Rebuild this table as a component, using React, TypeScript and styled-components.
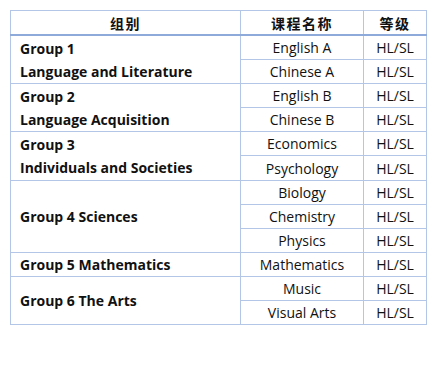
import React from 'react';
import styled, { createGlobalStyle } from 'styled-components';

const GlobalStyle = createGlobalStyle`
  body {
    margin: 0;
    background: #ffffff;
    font-family: "Open Sans", "Noto Sans CJK SC", sans-serif;
    color: #111111;
  }
`;

const Page = styled.div`
  padding: 10px 0 0 10px;
`;

const Table = styled.table`
  border-collapse: collapse;
  width: 413px;
  font-size: 14px;
  table-layout: fixed;
`;

const HeadCell = styled.th<{ $w: number }>`
  width: ${(p) => p.$w}px;
  height: 23px;
  padding: 0;
  border: 1px solid #b4c6e7;
  border-bottom: 2px solid #8eaadb;
  font-family: "Noto Sans CJK SC", sans-serif;
  font-weight: 700;
  font-size: 14px;
  letter-spacing: 1.5px;
  line-height: 22px;
  text-align: center;
  vertical-align: middle;
`;

const GroupCell = styled.td`
  padding: 0 0 0 9px;
  border: 1px solid #b4c6e7;
  font-weight: 700;
  line-height: 23px;
  text-align: left;
  vertical-align: middle;
`;

const Cell = styled.td`
  height: 23.1px;
  padding: 0;
  border: 1px solid #b4c6e7;
  line-height: 23px;
  text-align: center;
  vertical-align: middle;
`;

type Group = { title: string[]; courses: string[] };

const groups: Group[] = [
  { title: ['Group 1', 'Language and Literature'], courses: ['English A', 'Chinese A'] },
  { title: ['Group 2', 'Language Acquisition'], courses: ['English B', 'Chinese B'] },
  { title: ['Group 3', 'Individuals and Societies'], courses: ['Economics', 'Psychology'] },
  { title: ['Group 4 Sciences'], courses: ['Biology', 'Chemistry', 'Physics'] },
  { title: ['Group 5 Mathematics'], courses: ['Mathematics'] },
  { title: ['Group 6 The Arts'], courses: ['Music', 'Visual Arts'] },
];

export default function App() {
  return (
    <Page>
      <GlobalStyle />
      <Table>
        <thead>
          <tr>
            <HeadCell $w={229}>组别</HeadCell>
            <HeadCell $w={122}>课程名称</HeadCell>
            <HeadCell $w={62}>等级</HeadCell>
          </tr>
        </thead>
        <tbody>
          {groups.map((g) =>
            g.courses.map((c, i) => (
              <tr key={c}>
                {i === 0 && (
                  <GroupCell rowSpan={g.courses.length}>
                    {g.title.map((t) => (
                      <div key={t}>{t}</div>
                    ))}
                  </GroupCell>
                )}
                <Cell>{c}</Cell>
                <Cell>HL/SL</Cell>
              </tr>
            ))
          )}
        </tbody>
      </Table>
    </Page>
  );
}
